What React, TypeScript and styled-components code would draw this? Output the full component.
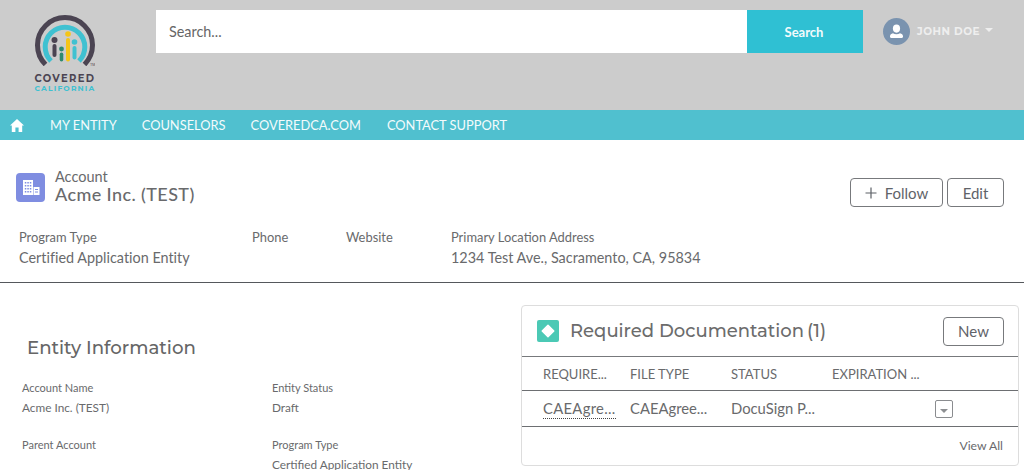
import * as React from 'react';
import styled, { createGlobalStyle } from 'styled-components';

const GlobalStyle = createGlobalStyle`
  html, body {
    margin: 0;
    padding: 0;
    background: #fff;
    overflow: hidden;
  }
  body {
    font-family: 'Lato', 'Liberation Sans', sans-serif;
    color: #696a6c;
  }
`;

const Page = styled.div`
  width: 1024px;
  height: 470px;
  overflow: hidden;
`;

const Header = styled.header`
  height: 110px;
  background: #cccccc;
  display: flex;
  align-items: flex-start;
  box-sizing: border-box;
  padding: 10px 0 0 35px;
`;

const LogoBox = styled.div`
  width: 60px;
  margin-top: 4px;
  display: flex;
  flex-direction: column;
  align-items: center;
  white-space: nowrap;
`;

const LogoCovered = styled.div`
  font-family: 'Montserrat', 'Inter', sans-serif;
  font-size: 10px;
  line-height: 11px;
  font-weight: 700;
  letter-spacing: 1.35px;
  color: #4b4452;
  margin-top: 7px;
`;

const LogoState = styled.div`
  font-family: 'Montserrat', 'Inter', sans-serif;
  font-size: 7.5px;
  line-height: 9px;
  font-weight: 700;
  letter-spacing: 1.2px;
  color: #3fc1d1;
`;

const SearchBar = styled.div`
  margin-left: 61px;
  width: 707px;
  height: 43px;
  display: flex;
`;

const SearchInput = styled.div`
  flex: 1;
  background: #fff;
  font-size: 14.4px;
  color: #666666;
  display: flex;
  align-items: center;
  padding-left: 13px;
`;

const SearchButton = styled.div`
  width: 116px;
  background: #2fc0d3;
  color: #f2fbfc;
  font-size: 13px;
  font-weight: 700;
  display: flex;
  align-items: center;
  justify-content: center;
  padding-right: 2px;
  box-sizing: border-box;
`;

const UserMenu = styled.div`
  margin-left: 20px;
  height: 43px;
  display: flex;
  align-items: center;
  color: #eeeeee;
  font-family: 'Montserrat', 'Inter', sans-serif;
  font-size: 10.5px;
  font-weight: 700;
  letter-spacing: 0.5px;
`;

const Avatar = styled.div`
  width: 27px;
  height: 27px;
  border-radius: 50%;
  background: #7a93af;
  display: flex;
  align-items: center;
  justify-content: center;
  margin-right: 7px;
`;

const Caret = styled.span`
  width: 0;
  height: 0;
  margin: -3px 0 0 5px;
  border-left: 4.5px solid transparent;
  border-right: 4.5px solid transparent;
  border-top: 4px solid #eeeeee;
`;

const Nav = styled.nav`
  height: 30px;
  background: #50c0cf;
  display: flex;
  align-items: center;
  padding-left: 10px;
  color: #f4fbfc;
  font-size: 12.85px;
`;

const NavLink = styled.span<{ $gap: number }>`
  margin-left: ${(p) => p.$gap}px;
`;

const Highlights = styled.section`
  height: 143px;
  box-sizing: border-box;
  border-bottom: 1px solid #55585c;
  padding: 29px 20px 0 16px;
`;

const TitleRow = styled.div`
  display: flex;
  align-items: flex-start;
`;

const RecordIcon = styled.div`
  width: 29px;
  height: 29px;
  border-radius: 4px;
  background: #7f8de1;
  display: flex;
  align-items: center;
  justify-content: center;
  margin: 4px 10px 0 0;
`;

const TitleText = styled.div`
  flex: 1;
`;

const TitleKicker = styled.div`
  font-size: 14.5px;
  line-height: 16px;
`;

const TitleName = styled.div`
  font-size: 18px;
  line-height: 20px;
  margin-top: -1px;
  font-weight: 500;
  letter-spacing: 0.4px;
`;

const Actions = styled.div`
  display: flex;
  gap: 4px;
  margin-top: 9px;
`;

const OutlineButton = styled.div<{ $width: number }>`
  width: ${(p) => p.$width}px;
  height: 29px;
  box-sizing: border-box;
  border: 1px solid #77797c;
  border-radius: 4px;
  background: #fff;
  font-size: 15px;
  color: #5f6369;
  display: flex;
  align-items: center;
  justify-content: center;
  gap: 8px;
`;

const FieldRow = styled.div`
  display: flex;
  margin: 22px 0 0 3px;
`;

const Field = styled.div<{ $width: number }>`
  width: ${(p) => p.$width}px;
`;

const FieldLabel = styled.div`
  font-size: 12.9px;
  line-height: 16px;
`;

const FieldValue = styled.div`
  font-size: 14.4px;
  line-height: 18px;
  margin-top: 4px;
  font-variant-ligatures: none;
`;

const Body = styled.div`
  display: flex;
  align-items: flex-start;
`;

const DetailColumn = styled.section`
  width: 521px;
  padding: 52px 0 0 22px;
  box-sizing: border-box;
`;

const SectionHeading = styled.h2`
  margin: 0 0 20px 5px;
  font-family: 'Montserrat', 'Inter', sans-serif;
  font-size: 18.2px;
  line-height: 26px;
  font-weight: 500;
  color: #666666;
`;

const DetailGrid = styled.div`
  display: grid;
  grid-template-columns: 250px 1fr;
  row-gap: 22px;
`;

const DetailLabel = styled.div`
  font-size: 11px;
  line-height: 14px;
`;

const DetailValue = styled.div`
  font-size: 11.8px;
  line-height: 16px;
  margin-top: 5px;
  min-height: 16px;
`;

const Card = styled.section`
  width: 498px;
  height: 161px;
  margin-top: 22px;
  box-sizing: border-box;
  border: 1px solid #dddddd;
  border-radius: 4px;
  overflow: hidden;
`;

const CardHeader = styled.div`
  height: 51px;
  box-sizing: border-box;
  border-bottom: 1px solid #77797c;
  display: flex;
  align-items: center;
  padding: 0 14px 0 15px;
`;

const CardIcon = styled.div`
  width: 22px;
  height: 22px;
  border-radius: 2px;
  background: #4bc9b5;
  display: flex;
  align-items: center;
  justify-content: center;
  margin-right: 11px;
`;

const CardTitle = styled.h3`
  flex: 1;
  margin: 0;
  font-family: 'Montserrat', 'Inter', sans-serif;
  font-size: 18px;
  font-weight: 500;
  color: #6c6c6c;
`;

const CardCount = styled.span`
  margin-left: 3px;
`;

const TableRow = styled.div<{ $height: number }>`
  height: ${(p) => p.$height}px;
  box-sizing: border-box;
  border-bottom: 1px solid #6d6f72;
  display: grid;
  grid-template-columns: 87px 101px 101px 102px 1fr;
  align-items: center;
  padding-left: 21px;
`;

const HeadCell = styled.div`
  font-size: 13px;
`;

const Cell = styled.div`
  font-size: 14.8px;
  margin-top: -1px;
`;

const LinkCell = styled.span`
  border-bottom: 1px dotted #444;
  padding-bottom: 1px;
  letter-spacing: 0.3px;
`;

const RowMenu = styled.div`
  width: 18px;
  height: 18px;
  box-sizing: border-box;
  border: 1px solid #8a8c8f;
  border-radius: 2px;
  display: flex;
  align-items: center;
  justify-content: center;
  margin: 1px 0 0 1px;
  &::after {
    content: '';
    margin-top: 3px;
    border-left: 4px solid transparent;
    border-right: 4px solid transparent;
    border-top: 4px solid #8d8f92;
  }
`;

const CardFooter = styled.div`
  height: 37px;
  display: flex;
  align-items: center;
  justify-content: flex-end;
  padding-right: 15px;
  font-size: 12.2px;
`;

// Arc with four figures, the brand mark above the wordmark
const LogoMark = () => (
  <svg width="60" height="52" viewBox="0 0 60 52" fill="none">
    <path d="M10.5 50.5 A27.5 27.5 0 1 1 49.5 50.5" stroke="#4b4452" strokeWidth="5" />
    <path d="M16 47 A19.8 19.8 0 1 1 44 47" stroke="#3fc1d1" strokeWidth="5" />
    <circle cx="19.5" cy="26" r="3" fill="#4b4452" />
    <rect x="17.5" y="30" width="4" height="13" rx="2" fill="#4b4452" />
    <circle cx="26.5" cy="35" r="2.4" fill="#2f8a6f" />
    <rect x="24.7" y="38.5" width="3.6" height="9" rx="1.8" fill="#2f8a6f" />
    <circle cx="33" cy="20" r="2.8" fill="#f5c518" />
    <rect x="31" y="24" width="4" height="23.5" rx="2" fill="#f5c518" />
    <circle cx="39.5" cy="28" r="2.8" fill="#3fc1d1" />
    <rect x="37.5" y="32" width="4" height="13.5" rx="2" fill="#3fc1d1" />
    <text x="55" y="52" fontSize="3.5" fontFamily="Inter, sans-serif" fill="#4b4452">TM</text>
  </svg>
);

const UserGlyph = () => (
  <svg width="15" height="15" viewBox="0 0 15 15" fill="#fff">
    <ellipse cx="7.5" cy="4.6" rx="3.6" ry="4.1" />
    <path d="M1 12.2c0-1.5 1.2-2.3 3-2.9.9.6 2.1 1 3.5 1s2.6-.4 3.5-1c1.8.6 3 1.4 3 2.9v.6c0 .7-.5 1.2-1.2 1.2H2.2C1.5 14 1 13.5 1 12.8z" />
  </svg>
);

const HomeGlyph = () => (
  <svg width="14" height="13" viewBox="0 0 14 13" fill="#fff">
    <path d="M7 0 L14 6.6 L12.2 6.6 L12.2 13 L8.6 13 L8.6 8.6 L5.4 8.6 L5.4 13 L1.8 13 L1.8 6.6 L0 6.6 Z" />
  </svg>
);

const BuildingGlyph = () => (
  <svg width="18" height="17" viewBox="0 0 18 17" fill="#fff">
    <path d="M1 1h10v15H1z" />
    <path d="M11.5 8h6v8h-6z" />
    <g fill="#7f8de1">
      <rect x="2.8" y="3" width="1.5" height="1.5" />
      <rect x="5.3" y="3" width="1.5" height="1.5" />
      <rect x="7.8" y="3" width="1.5" height="1.5" />
      <rect x="2.8" y="6" width="1.5" height="1.5" />
      <rect x="5.3" y="6" width="1.5" height="1.5" />
      <rect x="7.8" y="6" width="1.5" height="1.5" />
      <rect x="2.8" y="9" width="1.5" height="1.5" />
      <rect x="5.3" y="9" width="1.5" height="1.5" />
      <rect x="7.8" y="9" width="1.5" height="1.5" />
      <rect x="2.8" y="12" width="1.5" height="1.5" />
      <rect x="5.3" y="12" width="1.5" height="1.5" />
      <rect x="7.8" y="12" width="1.5" height="1.5" />
      <rect x="13" y="10" width="3" height="1" />
      <rect x="13" y="12.5" width="3" height="1" />
    </g>
  </svg>
);

const DiamondGlyph = () => (
  <svg width="14" height="14" viewBox="0 0 14 14" fill="#fff">
    <path d="M7 1.2 L12.8 7 L7 12.8 L1.2 7 Z" stroke="#fff" strokeWidth="1.4" strokeLinejoin="round" />
  </svg>
);

const PlusGlyph = () => (
  <svg width="12" height="12" viewBox="0 0 12 12" stroke="#5c6066" strokeWidth="1.2">
    <path d="M6 0.5v11M0.5 6h11" />
  </svg>
);

const navItems = [
  { label: 'MY ENTITY', gap: 26 },
  { label: 'COUNSELORS', gap: 25 },
  { label: 'COVEREDCA.COM', gap: 25 },
  { label: 'CONTACT SUPPORT', gap: 26 },
];

const highlightFields = [
  { label: 'Program Type', value: 'Certified Application Entity', width: 233 },
  { label: 'Phone', value: '', width: 94 },
  { label: 'Website', value: '', width: 105 },
  { label: 'Primary Location Address', value: '1234 Test Ave., Sacramento, CA, 95834', width: 300 },
];

const details = [
  { label: 'Account Name', value: 'Acme Inc. (TEST)' },
  { label: 'Entity Status', value: 'Draft' },
  { label: 'Parent Account', value: '' },
  { label: 'Program Type', value: 'Certified Application Entity' },
];

export default function App() {
  return (
    <Page>
      <GlobalStyle />
      <Header>
        <LogoBox>
          <LogoMark />
          <LogoCovered>COVERED</LogoCovered>
          <LogoState>CALIFORNIA</LogoState>
        </LogoBox>
        <SearchBar>
          <SearchInput>Search...</SearchInput>
          <SearchButton>Search</SearchButton>
        </SearchBar>
        <UserMenu>
          <Avatar>
            <UserGlyph />
          </Avatar>
          JOHN DOE
          <Caret />
        </UserMenu>
      </Header>
      <Nav>
        <HomeGlyph />
        {navItems.map((item) => (
          <NavLink key={item.label} $gap={item.gap}>
            {item.label}
          </NavLink>
        ))}
      </Nav>
      <Highlights>
        <TitleRow>
          <RecordIcon>
            <BuildingGlyph />
          </RecordIcon>
          <TitleText>
            <TitleKicker>Account</TitleKicker>
            <TitleName>Acme Inc. (TEST)</TitleName>
          </TitleText>
          <Actions>
            <OutlineButton $width={93}>
              <PlusGlyph />
              Follow
            </OutlineButton>
            <OutlineButton $width={57}>Edit</OutlineButton>
          </Actions>
        </TitleRow>
        <FieldRow>
          {highlightFields.map((f) => (
            <Field key={f.label} $width={f.width}>
              <FieldLabel>{f.label}</FieldLabel>
              <FieldValue>{f.value}</FieldValue>
            </Field>
          ))}
        </FieldRow>
      </Highlights>
      <Body>
        <DetailColumn>
          <SectionHeading>Entity Information</SectionHeading>
          <DetailGrid>
            {details.map((d) => (
              <div key={d.label + d.value}>
                <DetailLabel>{d.label}</DetailLabel>
                <DetailValue>{d.value}</DetailValue>
              </div>
            ))}
          </DetailGrid>
        </DetailColumn>
        <Card>
          <CardHeader>
            <CardIcon>
              <DiamondGlyph />
            </CardIcon>
            <CardTitle>
              Required Documentation<CardCount>(1)</CardCount>
            </CardTitle>
            <OutlineButton $width={61}>New</OutlineButton>
          </CardHeader>
          <TableRow $height={34}>
            <HeadCell>REQUIRE...</HeadCell>
            <HeadCell>FILE TYPE</HeadCell>
            <HeadCell>STATUS</HeadCell>
            <HeadCell>EXPIRATION ...</HeadCell>
          </TableRow>
          <TableRow $height={36}>
            <Cell>
              <LinkCell>CAEAgre...</LinkCell>
            </Cell>
            <Cell>CAEAgree...</Cell>
            <Cell>DocuSign P...</Cell>
            <Cell />
            <RowMenu />
          </TableRow>
          <CardFooter>View All</CardFooter>
        </Card>
      </Body>
    </Page>
  );
}
